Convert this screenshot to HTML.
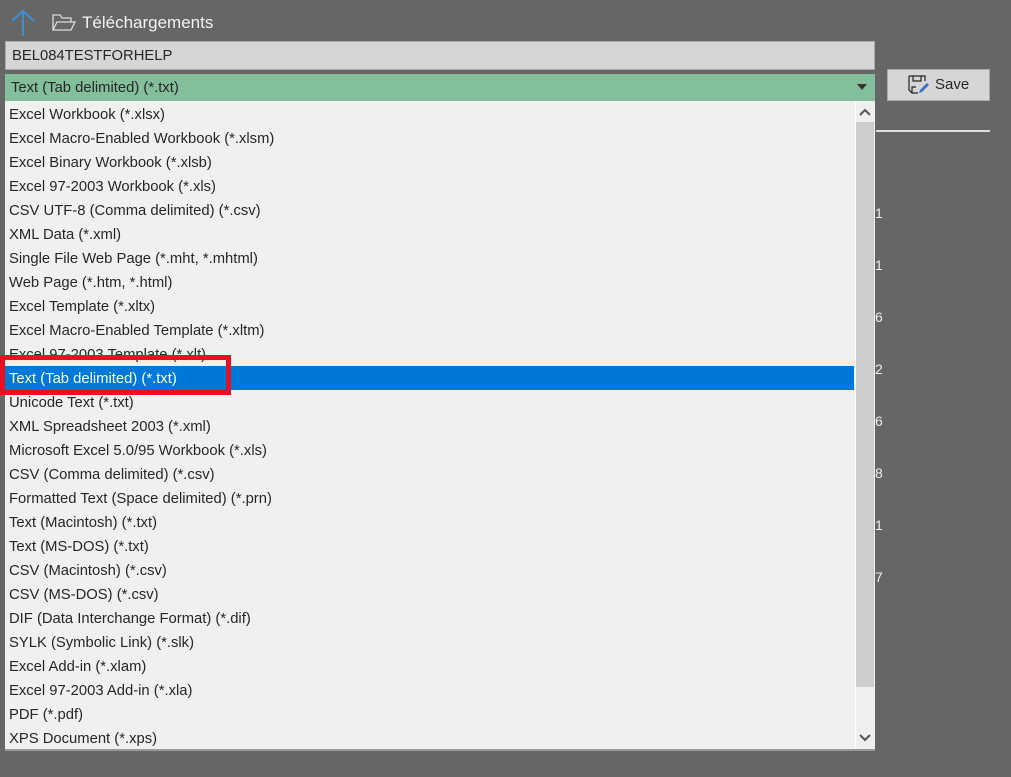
<!DOCTYPE html>
<html><head><meta charset="utf-8"><style>
body{margin:0;width:1011px;height:777px;background:#666;position:relative;overflow:hidden;font-family:"Segoe UI","Liberation Sans",sans-serif;}
.a{position:absolute}
.t{font-size:14px;color:#262626;}
.item{position:absolute;left:9px;font-size:14.8px;color:#262626;line-height:24px;white-space:nowrap;margin-top:1px}
.num{position:absolute;left:875px;color:#eee;font-size:14px}
</style></head><body>
<svg class="a" style="left:10px;top:9px" width="26" height="28"><path d="M13 27V2M2 12L13 2L24 12" stroke="#3a8fd8" stroke-width="2" fill="none"/></svg>
<svg class="a" style="left:52px;top:14px" width="24" height="18"><path d="M1 16V1h7l2 3h9v4M1 16L5 8h18l-4 8z" stroke="#ddd" stroke-width="1.3" fill="none"/></svg>
<div class="a" style="left:82px;top:13px;font-size:17px;color:#f2f2f2">Téléchargements</div>
<div class="a" style="left:5px;top:41px;width:868px;height:27px;background:#d6d6d6;border:1px solid #aaa"></div>
<div class="a t" style="left:12px;top:48px;font-size:14.8px">BEL084TESTFORHELP</div>
<div class="a" style="left:5px;top:74px;width:870px;height:27px;background:#84bf9c"></div>
<div class="a t" style="left:11px;top:80px;font-size:14.8px">Text (Tab delimited) (*.txt)</div>
<svg class="a" style="left:857px;top:84px" width="10" height="6"><path d="M0 0h10L5 6z" fill="#333"/></svg>
<div class="a" style="left:5px;top:101px;width:869px;height:648px;background:#f0f0f0;border-right:1px solid #999;border-bottom:2px solid #999"></div>
<div class="a" style="left:855px;top:101px;width:19px;height:648px;background:#efefef;border-left:1px solid #fff"></div>
<div class="a" style="left:856px;top:122px;width:18px;height:565px;background:#cdcdcd"></div>
<svg class="a" style="left:859px;top:108px" width="12" height="8"><path d="M1 7L6 2L11 7" stroke="#555" stroke-width="2" fill="none"/></svg>
<svg class="a" style="left:859px;top:734px" width="12" height="8"><path d="M1 1L6 6L11 1" stroke="#555" stroke-width="2" fill="none"/></svg>
<div class="a" style="left:5px;top:366px;width:849px;height:24px;background:#0078d7"></div>
<div class="item" style="top:102px">Excel Workbook (*.xlsx)</div>
<div class="item" style="top:126px">Excel Macro-Enabled Workbook (*.xlsm)</div>
<div class="item" style="top:150px">Excel Binary Workbook (*.xlsb)</div>
<div class="item" style="top:174px">Excel 97-2003 Workbook (*.xls)</div>
<div class="item" style="top:198px">CSV UTF-8 (Comma delimited) (*.csv)</div>
<div class="item" style="top:222px">XML Data (*.xml)</div>
<div class="item" style="top:246px">Single File Web Page (*.mht, *.mhtml)</div>
<div class="item" style="top:270px">Web Page (*.htm, *.html)</div>
<div class="item" style="top:294px">Excel Template (*.xltx)</div>
<div class="item" style="top:318px">Excel Macro-Enabled Template (*.xltm)</div>
<div class="item" style="top:342px">Excel 97-2003 Template (*.xlt)</div>
<div class="item" style="top:366px;color:#fff">Text (Tab delimited) (*.txt)</div>
<div class="item" style="top:390px">Unicode Text (*.txt)</div>
<div class="item" style="top:414px">XML Spreadsheet 2003 (*.xml)</div>
<div class="item" style="top:438px">Microsoft Excel 5.0/95 Workbook (*.xls)</div>
<div class="item" style="top:462px">CSV (Comma delimited) (*.csv)</div>
<div class="item" style="top:486px">Formatted Text (Space delimited) (*.prn)</div>
<div class="item" style="top:510px">Text (Macintosh) (*.txt)</div>
<div class="item" style="top:534px">Text (MS-DOS) (*.txt)</div>
<div class="item" style="top:558px">CSV (Macintosh) (*.csv)</div>
<div class="item" style="top:582px">CSV (MS-DOS) (*.csv)</div>
<div class="item" style="top:606px">DIF (Data Interchange Format) (*.dif)</div>
<div class="item" style="top:630px">SYLK (Symbolic Link) (*.slk)</div>
<div class="item" style="top:654px">Excel Add-in (*.xlam)</div>
<div class="item" style="top:678px">Excel 97-2003 Add-in (*.xla)</div>
<div class="item" style="top:702px">PDF (*.pdf)</div>
<div class="item" style="top:726px">XPS Document (*.xps)</div>
<div class="a" style="left:0;top:355px;width:221px;height:30px;border:5px solid #e81123"></div>
<div class="a" style="left:887px;top:69px;width:101px;height:30px;background:#d6d6d6;border:1px solid #aaa"></div>
<svg class="a" style="left:908px;top:75px" width="22" height="20"><path d="M1 1h16v5M1 1v14l3 3h6M5 1v5h8V1M4 18v-6h4" stroke="#222" stroke-width="1.2" fill="none"/><path d="M11 18l1-3 7-7 2 2-7 7z" fill="#3b6fc4"/></svg>
<div class="a t" style="left:935px;top:76px;font-size:15px">Save</div>
<div class="a" style="left:876px;top:130px;width:114px;height:2px;background:#ddd"></div>
<div class="num" style="top:205px">1</div><div class="num" style="top:257px">1</div><div class="num" style="top:309px">6</div><div class="num" style="top:361px">2</div><div class="num" style="top:413px">6</div><div class="num" style="top:465px">8</div><div class="num" style="top:517px">1</div><div class="num" style="top:569px">7</div>
</body></html>
